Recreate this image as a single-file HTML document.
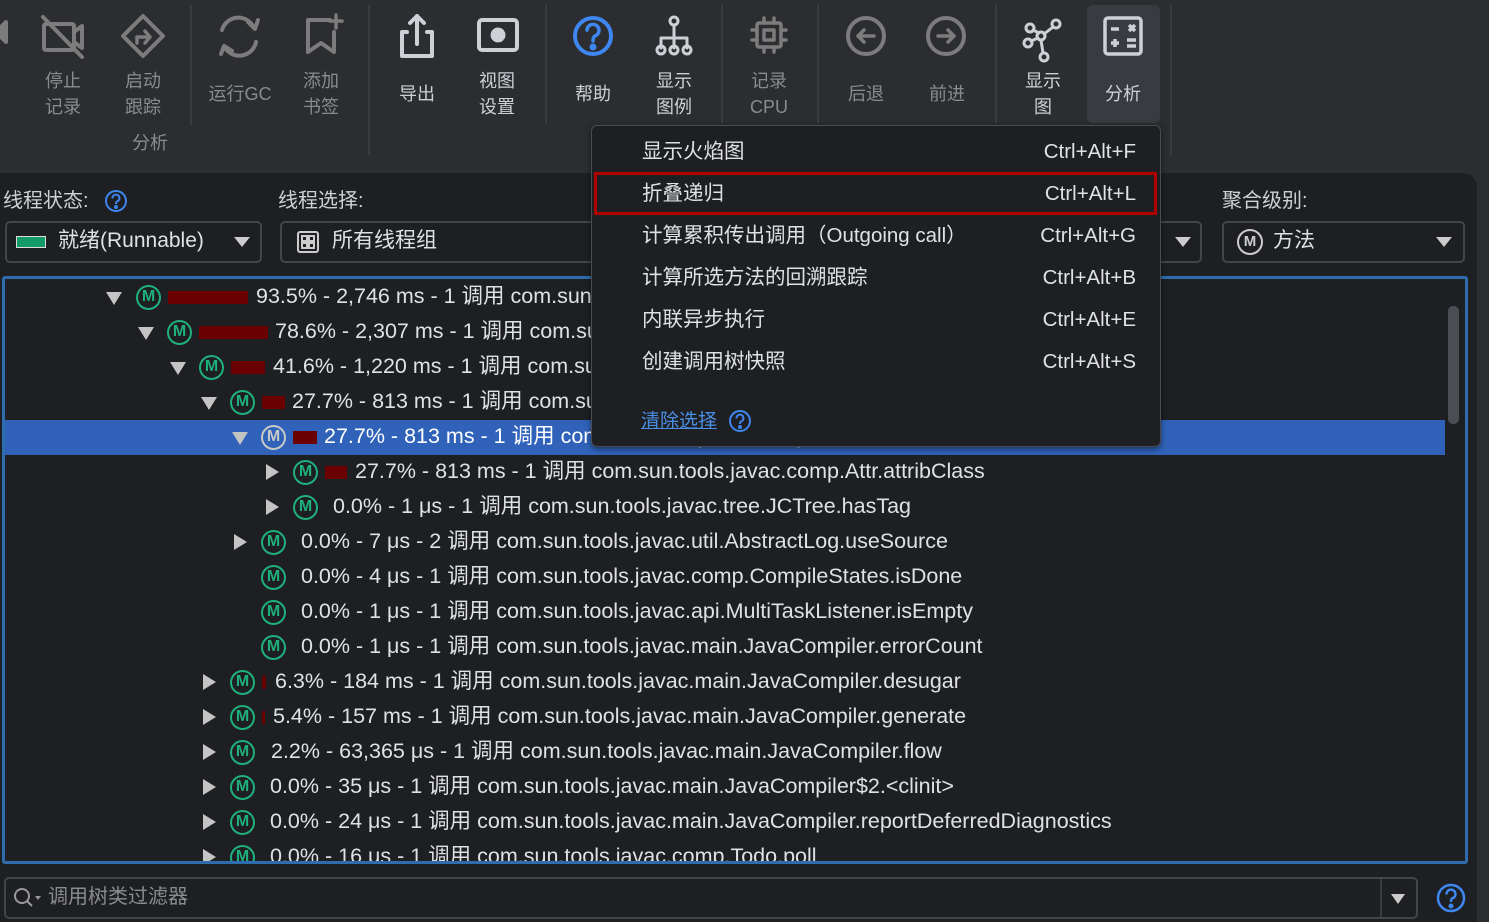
<!DOCTYPE html>
<html><head><meta charset="utf-8"><style>
*{margin:0;padding:0;box-sizing:border-box}
body{width:1489px;height:922px;background:#2b2d30;font-family:"Liberation Sans","Noto Sans CJK SC",sans-serif;color:#dfe1e5;position:relative;overflow:hidden}
.a{position:absolute;white-space:nowrap}
.lbl{position:absolute;font-size:18px;line-height:26px;text-align:center;width:80px;color:#8a8b8e}
.en{color:#ced0d6}
.sep{position:absolute;width:2px;background:#393b40;top:5px}
.ic{position:absolute}
.row{position:absolute;left:5px;width:1440px;height:35px;font-size:21.5px;line-height:35px}
.row span{position:absolute;white-space:nowrap;top:-1px}
.m{position:absolute;top:5px;width:25px;height:25px;border:2.5px solid #1fb07c;border-radius:50%;color:#1fb07c;font-weight:bold;font-size:16px;line-height:20px;text-align:center;font-family:"Liberation Sans",sans-serif}
.bar{position:absolute;top:11px;height:13px;background:#6b0000}
.td{position:absolute;top:12px;width:0;height:0;border-left:8px solid transparent;border-right:8px solid transparent;border-top:13px solid #c4c4c4}
.tr{position:absolute;top:9px;width:0;height:0;border-top:8px solid transparent;border-bottom:8px solid transparent;border-left:13px solid #c4c4c4}
.mi{position:absolute;left:642px;font-size:20.5px;line-height:30px;color:#dfe1e5}
.sc{position:absolute;right:353px;font-size:20.5px;line-height:30px;color:#dfe1e5;font-family:"Liberation Sans",sans-serif}
.box{position:absolute;border:2px solid #43454a;border-radius:5px;background:#1e1f22}
.fl{font-size:20px;line-height:26px}
</style></head><body>
<svg class="ic" style="left:0;top:0" width="1180" height="70" fill="none" stroke-width="4" stroke-linecap="round" stroke-linejoin="round">
<path d="M0 28 L6 22 L6 42 L0 36" stroke="#7c7c7c" fill="#7c7c7c"/>
<g stroke="#7c7c7c"><rect x="44" y="24" width="30" height="26" rx="2"/><path d="M74 32 L82 26 L82 48 L74 42"/><path d="M43 17 L82 57" stroke-width="4"/></g>
<g stroke="#7c7c7c"><path d="M143 16 L163 36 L143 56 L123 36 Z"/><path d="M137 43 V37 H150 M145 31 L150 37 L145 43" stroke-width="3.5"/></g>
<g stroke="#7c7c7c"><path d="M222 30 A17 17 0 0 1 254 28 M256 42 A17 17 0 0 1 224 46"/><path d="M248 22 L255 29 L258 20 M232 51 L224 46 L221 54" /></g>
<g stroke="#7c7c7c"><path d="M330 20 H308 V52 L321 43 L334 52 V32"/><path d="M336 15 V28 M330 21 H342" stroke-width="3.5"/></g>
<g stroke="#ced0d6"><path d="M407 32 H402 V56 H432 V32 H427"/><path d="M417 44 V16 M410 23 L417 16 L424 23"/></g>
<g stroke="#ced0d6"><rect x="479" y="20" width="38" height="30" rx="3"/><circle cx="498" cy="35" r="6" fill="#ced0d6" stroke-width="3" stroke-dasharray="3 2"/></g>
<g stroke="#3f87f0" stroke-width="4"><circle cx="593" cy="36" r="18"/><path d="M587 30 A6 6 0 1 1 595 36 Q593 37 593 41" stroke-width="3.5"/><circle cx="593" cy="47" r="1.5" fill="#3f87f0"/></g>
<g stroke="#ced0d6" stroke-width="3"><circle cx="674" cy="21" r="4"/><path d="M674 25 V36 M661 48 V38 H687 V48 M674 36 V48"/><circle cx="661" cy="50" r="4"/><circle cx="674" cy="50" r="4"/><circle cx="687" cy="50" r="4"/></g>
<g stroke="#7c7c7c" stroke-width="3.5"><rect x="757" y="23" width="24" height="24" rx="2"/><rect x="764" y="30" width="10" height="10"/><path d="M764 18 V23 M774 18 V23 M764 47 V52 M774 47 V52 M752 30 H757 M752 40 H757 M781 30 H786 M781 40 H786"/></g>
<g stroke="#7c7c7c"><circle cx="866" cy="36" r="18"/><path d="M874 36 H858 M864 30 L858 36 L864 42" stroke-width="3.5"/></g>
<g stroke="#7c7c7c"><circle cx="946" cy="36" r="18"/><path d="M938 36 H954 M948 30 L954 36 L948 42" stroke-width="3.5"/></g>
<g stroke="#ced0d6" stroke-width="3"><circle cx="1056" cy="24" r="4"/><circle cx="1041" cy="36" r="4"/><circle cx="1028" cy="43" r="4"/><circle cx="1030" cy="28" r="4"/><circle cx="1044" cy="57" r="4"/><path d="M1053 27 L1044 34 M1038 38 L1031 41 M1039 33 L1033 30 M1041 40 L1043 53"/></g>
</svg>
<div class="a" style="left:1087px;top:5px;width:73px;height:118px;background:#393b40;border-radius:6px"></div>
<svg class="ic" style="left:1100px;top:14px" width="48" height="46" fill="none" stroke="#ced0d6" stroke-width="3.5"><rect x="5" y="4" width="36" height="36" rx="3"/><path d="M11 15 H19 M29 11 L35 17 M35 11 L29 17 M11 29 H19 M15 25 V33 M27 26 H36 M27 32 H36"/></svg>
<div class="sep" style="left:190px;height:120px"></div>
<div class="sep" style="left:368px;height:150px"></div>
<div class="sep" style="left:545px;height:118px"></div>
<div class="sep" style="left:721px;height:118px"></div>
<div class="sep" style="left:817px;height:118px"></div>
<div class="sep" style="left:995px;height:118px"></div>
<div class="sep" style="left:1170px;height:150px"></div>
<div class="lbl" style="left:23px;top:68px">停止<br>记录</div>
<div class="lbl" style="left:103px;top:68px">启动<br>跟踪</div>
<div class="lbl" style="left:110px;top:130px">分析</div>
<div class="lbl" style="left:200px;top:81px">运行GC</div>
<div class="lbl" style="left:281px;top:68px">添加<br>书签</div>
<div class="lbl en" style="left:377px;top:81px">导出</div>
<div class="lbl en" style="left:457px;top:68px">视图<br>设置</div>
<div class="lbl en" style="left:553px;top:81px">帮助</div>
<div class="lbl en" style="left:634px;top:68px">显示<br>图例</div>
<div class="lbl" style="left:729px;top:68px">记录<br>CPU</div>
<div class="lbl" style="left:826px;top:81px">后退</div>
<div class="lbl" style="left:907px;top:81px">前进</div>
<div class="lbl en" style="left:1003px;top:68px">显示<br>图</div>
<div class="lbl en" style="left:1083px;top:81px">分析</div>

<div class="a" style="left:0;top:173px;width:1477px;height:749px;background:#1e1f22;border-radius:0 14px 0 0"></div>
<div class="a fl" style="left:3px;top:188px;color:#ced0d6">线程状态:</div>
<svg class="ic" style="left:104px;top:189px" width="24" height="24" fill="none" stroke="#3f87f0" stroke-width="2"><circle cx="12" cy="12" r="10"/><path d="M8.5 9.5 A3.5 3.5 0 1 1 13 12.5 Q12 13 12 15"/><circle cx="12" cy="18" r="1" fill="#3f87f0"/></svg>
<div class="a fl" style="left:278px;top:188px;color:#ced0d6">线程选择:</div>
<div class="a fl" style="left:1222px;top:188px;color:#ced0d6">聚合级别:</div>
<div class="box" style="left:5px;top:221px;width:257px;height:42px"></div>
<div class="a" style="left:16px;top:236px;width:30px;height:12px;background:#139b6a;border:1px solid #ddd"></div>
<div class="a" style="left:58px;top:227px;font-size:21px;line-height:28px">就绪(Runnable)</div>
<div class="a" style="left:234px;top:237px;border-left:8px solid transparent;border-right:8px solid transparent;border-top:10px solid #ccc"></div>
<div class="box" style="left:280px;top:221px;width:922px;height:42px"></div>
<svg class="ic" style="left:296px;top:230px" width="24" height="24" fill="none" stroke="#ccc" stroke-width="2"><rect x="2" y="2" width="20" height="20" rx="2"/><rect x="6" y="6" width="5" height="5"/><rect x="13" y="6" width="5" height="5"/><rect x="6" y="13" width="5" height="5"/><rect x="13" y="13" width="5" height="5"/></svg>
<div class="a" style="left:332px;top:227px;font-size:21px;line-height:28px">所有线程组</div>
<div class="a" style="left:1175px;top:237px;border-left:8px solid transparent;border-right:8px solid transparent;border-top:10px solid #ccc"></div>
<div class="box" style="left:1222px;top:221px;width:243px;height:42px"></div>
<div class="a" style="left:1237px;top:229px;width:26px;height:26px;border:2.5px solid #ccc;border-radius:50%;color:#ccc;font-weight:bold;font-size:15px;line-height:21px;text-align:center">M</div>
<div class="a" style="left:1273px;top:227px;font-size:21px;line-height:28px">方法</div>
<div class="a" style="left:1436px;top:237px;border-left:8px solid transparent;border-right:8px solid transparent;border-top:10px solid #ccc"></div>

<div class="a" style="left:2px;top:276px;width:1466px;height:588px;border:3px solid #2e6cae;border-radius:3px;overflow:hidden;background:#1e1f22">
<div style="position:absolute;left:-5px;top:-279px;width:1466px;height:922px">
<div class="row" style="top:280px"><div class="td" style="left:101px"></div><div class="m" style="left:131px">M</div><div class="bar" style="left:163px;width:80px"></div><span style="left:251px">93.5% - 2,746 ms - 1 调用 com.sun.tools.javac.main.JavaCompiler.compile</span></div>
<div class="row" style="top:315px"><div class="td" style="left:133px"></div><div class="m" style="left:162px">M</div><div class="bar" style="left:194px;width:69px"></div><span style="left:270px">78.6% - 2,307 ms - 1 调用 com.sun.tools.javac.main.JavaCompiler.compile2</span></div>
<div class="row" style="top:350px"><div class="td" style="left:165px"></div><div class="m" style="left:194px">M</div><div class="bar" style="left:226px;width:34px"></div><span style="left:268px">41.6% - 1,220 ms - 1 调用 com.sun.tools.javac.main.JavaCompiler.attribute</span></div>
<div class="row" style="top:385px"><div class="td" style="left:196px"></div><div class="m" style="left:225px">M</div><div class="bar" style="left:257px;width:23px"></div><span style="left:287px">27.7% - 813 ms - 1 调用 com.sun.tools.javac.main.JavaCompiler.attribute</span></div>
<div class="row" style="top:420px;background:#2f62b8"><div class="td" style="left:227px"></div><div class="m" style="left:256px;border-color:#c8c8c8;color:#c8c8c8">M</div><div class="bar" style="left:288px;width:24px"></div><span style="left:319px;color:#fff">27.7% - 813 ms - 1 调用 com.sun.tools.javac.comp.Attr.attrib</span></div>
<div class="row" style="top:455px"><div class="tr" style="left:261px"></div><div class="m" style="left:288px">M</div><div class="bar" style="left:320px;width:22px"></div><span style="left:350px">27.7% - 813 ms - 1 调用 com.sun.tools.javac.comp.Attr.attribClass</span></div>
<div class="row" style="top:490px"><div class="tr" style="left:261px"></div><div class="m" style="left:288px">M</div><span style="left:328px">0.0% - 1 μs - 1 调用 com.sun.tools.javac.tree.JCTree.hasTag</span></div>
<div class="row" style="top:525px"><div class="tr" style="left:229px"></div><div class="m" style="left:256px">M</div><span style="left:296px">0.0% - 7 μs - 2 调用 com.sun.tools.javac.util.AbstractLog.useSource</span></div>
<div class="row" style="top:560px"><div class="m" style="left:256px">M</div><span style="left:296px">0.0% - 4 μs - 1 调用 com.sun.tools.javac.comp.CompileStates.isDone</span></div>
<div class="row" style="top:595px"><div class="m" style="left:256px">M</div><span style="left:296px">0.0% - 1 μs - 1 调用 com.sun.tools.javac.api.MultiTaskListener.isEmpty</span></div>
<div class="row" style="top:630px"><div class="m" style="left:256px">M</div><span style="left:296px">0.0% - 1 μs - 1 调用 com.sun.tools.javac.main.JavaCompiler.errorCount</span></div>
<div class="row" style="top:665px"><div class="tr" style="left:198px"></div><div class="m" style="left:225px">M</div><div class="bar" style="left:257px;width:4px"></div><span style="left:270px">6.3% - 184 ms - 1 调用 com.sun.tools.javac.main.JavaCompiler.desugar</span></div>
<div class="row" style="top:700px"><div class="tr" style="left:198px"></div><div class="m" style="left:225px">M</div><div class="bar" style="left:257px;width:3px"></div><span style="left:268px">5.4% - 157 ms - 1 调用 com.sun.tools.javac.main.JavaCompiler.generate</span></div>
<div class="row" style="top:735px"><div class="tr" style="left:198px"></div><div class="m" style="left:225px">M</div><span style="left:266px">2.2% - 63,365 μs - 1 调用 com.sun.tools.javac.main.JavaCompiler.flow</span></div>
<div class="row" style="top:770px"><div class="tr" style="left:198px"></div><div class="m" style="left:225px">M</div><span style="left:265px">0.0% - 35 μs - 1 调用 com.sun.tools.javac.main.JavaCompiler$2.&lt;clinit&gt;</span></div>
<div class="row" style="top:805px"><div class="tr" style="left:198px"></div><div class="m" style="left:225px">M</div><span style="left:265px">0.0% - 24 μs - 1 调用 com.sun.tools.javac.main.JavaCompiler.reportDeferredDiagnostics</span></div>
<div class="row" style="top:840px"><div class="tr" style="left:198px"></div><div class="m" style="left:225px">M</div><span style="left:265px">0.0% - 16 μs - 1 调用 com.sun.tools.javac.comp.Todo.poll</span></div>
</div></div>
<div class="a" style="left:1448px;top:306px;width:11px;height:118px;background:#4a4d52;border-radius:5px"></div>

<div class="a" style="left:591px;top:125px;width:570px;height:322px;background:#1e1f22;border:1px solid #4a4c52;border-radius:6px;box-shadow:0 2px 6px rgba(0,0,0,.5)"></div>
<div class="a" style="left:594px;top:172px;width:563px;height:43px;border:3px solid #b00000"></div>
<div class="mi a" style="top:137px">显示火焰图</div><div class="sc a" style="top:137px">Ctrl+Alt+F</div>
<div class="mi a" style="top:179px">折叠递归</div><div class="sc a" style="top:179px">Ctrl+Alt+L</div>
<div class="mi a" style="top:221px">计算累积传出调用（Outgoing call）</div><div class="sc a" style="top:221px">Ctrl+Alt+G</div>
<div class="mi a" style="top:263px">计算所选方法的回溯跟踪</div><div class="sc a" style="top:263px">Ctrl+Alt+B</div>
<div class="mi a" style="top:305px">内联异步执行</div><div class="sc a" style="top:305px">Ctrl+Alt+E</div>
<div class="mi a" style="top:347px">创建调用树快照</div><div class="sc a" style="top:347px">Ctrl+Alt+S</div>
<div class="a" style="left:641px;top:408px;font-size:19px;line-height:28px;color:#4a8fe7;text-decoration:underline">清除选择</div>
<svg class="ic" style="left:728px;top:409px" width="24" height="24" fill="none" stroke="#3f87f0" stroke-width="2"><circle cx="12" cy="12" r="10"/><path d="M8.5 9.5 A3.5 3.5 0 1 1 13 12.5 Q12 13 12 15"/><circle cx="12" cy="18" r="1" fill="#3f87f0"/></svg>

<div class="box" style="left:4px;top:877px;width:1414px;height:42px;background:#1e1f22"></div>
<div class="a" style="left:1380px;top:879px;width:2px;height:38px;background:#393b40"></div>
<div class="a" style="left:1391px;top:894px;border-left:7px solid transparent;border-right:7px solid transparent;border-top:10px solid #ccc"></div>
<svg class="ic" style="left:13px;top:886px" width="32" height="24" fill="none" stroke="#999" stroke-width="2"><circle cx="9" cy="10" r="7"/><path d="M14 15 L19 20"/><path d="M22 10 L28 10 L25 14 Z" fill="#999" stroke="none"/></svg>
<div class="a" style="left:48px;top:884px;font-size:20px;line-height:26px;color:#8a8b8e">调用树类过滤器</div>
<svg class="ic" style="left:1435px;top:882px" width="32" height="32" fill="none" stroke="#3f87f0" stroke-width="2.5"><circle cx="16" cy="16" r="13"/><path d="M11.5 12.5 A4.5 4.5 0 1 1 17 16.5 Q16 17 16 20"/><circle cx="16" cy="24" r="1.3" fill="#3f87f0"/></svg>
</body></html>
